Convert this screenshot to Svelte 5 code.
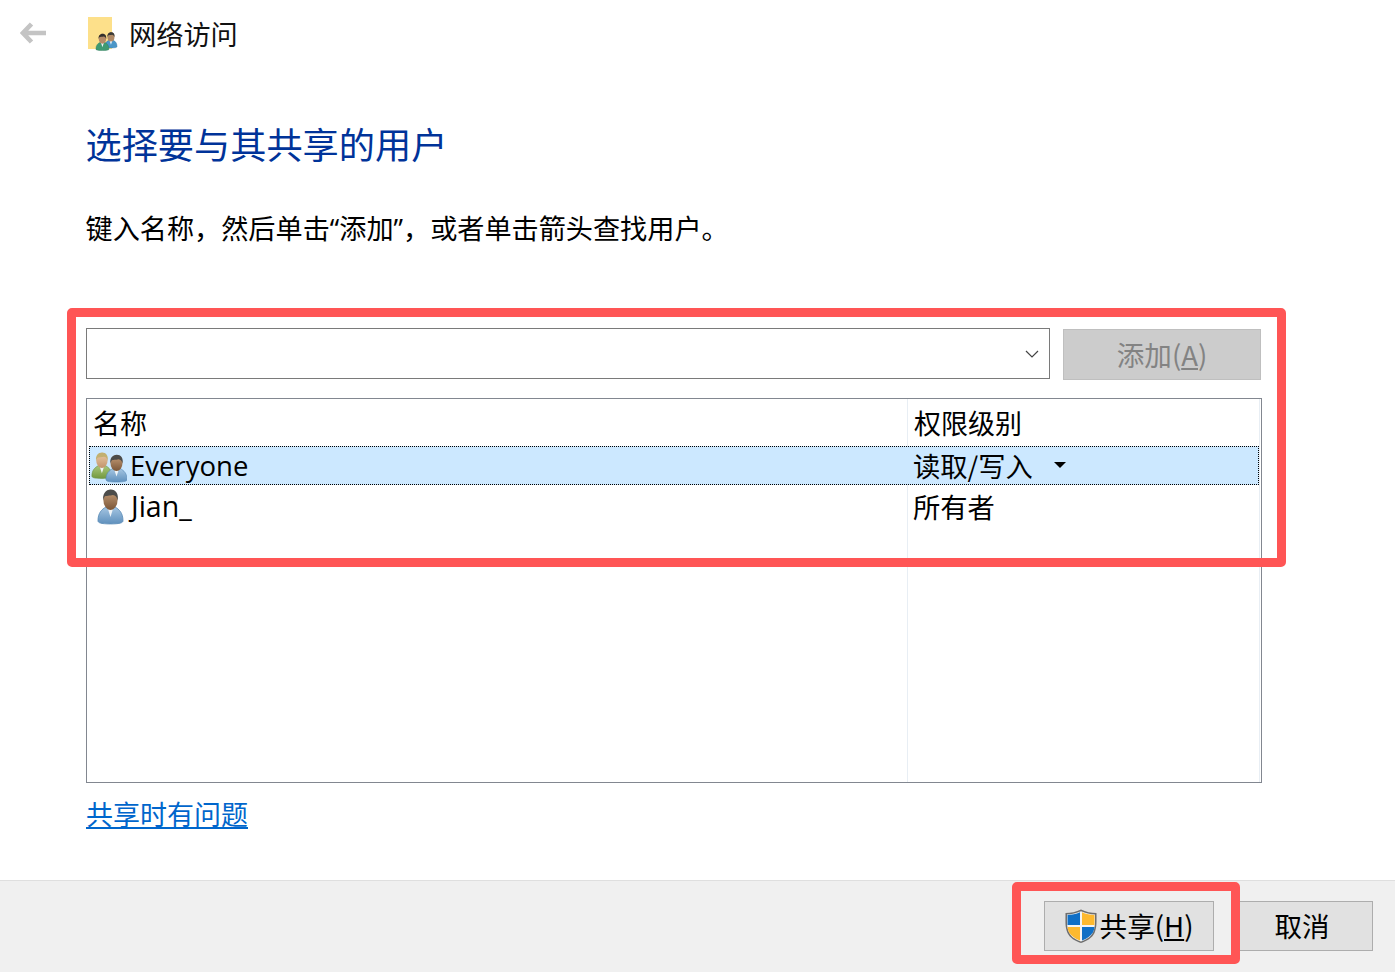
<script>
  const rows = [
    { name: "Everyone", level: "读取/写入", selected: true, group: true },
    { name: "Jian_", level: "所有者", selected: false, group: false }
  ];
</script>

{#snippet person(skin, hair, shirt, shirtDark)}
  <path d="M1.500 25c0-6 3-9 7-11l3.500 1.500 3.500-1.500c4 2 7 5 7 11 0 1.500-2 2.500-10.500 2.500s-10.500-1-10.500-2.500z" fill={shirt} stroke={shirtDark} stroke-width=".7" />
  <path d="M9.500 14.500l2.500 7.500 2.500-7.500-2.500 1z" fill="#eef3f7" />
  <ellipse cx="12" cy="8.500" rx="6" ry="8" fill={skin} />
  <path d="M6 9C5 4 8 .3 12.300 .3c4 0 6.800 3.400 5.700 8.700-.6-2.800-1.800-3.900-4-4.200-2.200.7-6.300.4-7 1.400-.5.800-.8 1.600-1 2.800z" fill={hair} />
{/snippet}

<div class="page">
  <svg class="defs" width="0" height="0" aria-hidden="true">
    <defs>
      <linearGradient id="skin-dark" x1="0" y1="0" x2="0" y2="1">
        <stop offset="0" stop-color="#c9a07a" />
        <stop offset="1" stop-color="#7a5638" />
      </linearGradient>
      <linearGradient id="skin-light" x1="0" y1="0" x2="0" y2="1">
        <stop offset="0" stop-color="#eccba6" />
        <stop offset="1" stop-color="#c2946c" />
      </linearGradient>
      <linearGradient id="shirt-blue" x1="0" y1="0" x2="0" y2="1">
        <stop offset="0" stop-color="#a6c6e2" />
        <stop offset="1" stop-color="#5f90bd" />
      </linearGradient>
      <linearGradient id="shirt-green" x1="0" y1="0" x2="0" y2="1">
        <stop offset="0" stop-color="#a9c77c" />
        <stop offset="1" stop-color="#73993f" />
      </linearGradient>
    </defs>
  </svg>

  <header class="top">
    <svg class="back" width="28" height="22" viewBox="0 0 28 22" aria-hidden="true">
      <path d="M11.500 2L3 11l8.500 9M4 11H26" fill="none" stroke="#c4c4c4" stroke-width="4.600" />
    </svg>
    <svg class="folder" width="30" height="34" viewBox="0 0 30 34" aria-hidden="true">
      <rect x="0" y="0" width="24" height="32" fill="#fde08a" />
      <g transform="translate(16 15) scale(.58)">{@render person("#b08a66", "#3a3a36", "#4a96c8", "#3a7ca8")}</g>
      <g transform="translate(7 16.500) scale(.62)">{@render person("#b58b68", "#33302c", "#3f9a72", "#2f7c5a")}</g>
    </svg>
    <span class="title">网络访问</span>
  </header>

  <main class="content">
    <h1>选择要与其共享的用户</h1>
    <p class="hint">键入名称，然后单击<span class="quote">“</span>添加<span class="quote">”</span>，或者单击箭头查找用户。</p>

    <div class="picker">
      <div class="combo">
        <svg width="14" height="8" viewBox="0 0 14 8" aria-hidden="true">
          <path d="M1 1l6 6 6-6" fill="none" stroke="#444" stroke-width="1.200" />
        </svg>
      </div>
      <button class="add" disabled>添加(<u>A</u>)</button>
    </div>

    <div class="list">
      <div class="row head">
        <span class="name">名称</span>
        <span class="level">权限级别</span>
      </div>
      {#each rows as row}
        <div class="row" class:selected={row.selected}>
          <span class="name" class:solo={!row.group}>
            <svg class="avatar" width="36" height="36" viewBox="0 0 36 36" aria-hidden="true">
              {#if row.group}
                <g transform="translate(-.5 4.300) scale(.95)">{@render person("url(#skin-light)", "#c2b070", "url(#shirt-green)", "#6f9448")}</g>
                <g transform="translate(13.500 6.500)">{@render person("url(#skin-dark)", "#4c4c4a", "url(#shirt-blue)", "#5c8db8")}</g>
              {:else}
                <g transform="translate(5.200 0) scale(1.190 1.270)">{@render person("url(#skin-dark)", "#4c4c4a", "url(#shirt-blue)", "#5c8db8")}</g>
              {/if}
            </svg>
            {row.name}
          </span>
          <span class="level">
            {row.level}
            {#if row.selected}<i class="caret"></i>{/if}
          </span>
        </div>
      {/each}
    </div>

    <a class="help" href="#help">共享时有问题</a>
  </main>

  <footer class="bottom">
    <button class="action share">
      <svg width="34" height="36" viewBox="0 0 34 36" aria-hidden="true">
        <path d="M17 1.500C12 4 7 5 1.500 5c0 9-.5 14 2 20 2.500 5 7.500 8 13.500 10 6-2 11-5 13.500-10 2.500-6 2-11 2-20C27 5 22 4 17 1.500z" fill="#6e6e6e" />
        <path d="M17 3.200C12.500 5.300 8 6.300 3 6.400c0 8-.3 13 2 18 2.300 4.500 6.800 7.300 12 9 5.200-1.700 9.700-4.500 12-9 2.300-5 2-10 2-18-5-.1-9.500-1.100-14-3.200z" fill="#f4f4f4" />
        <path d="M16 4.200C12 6 8 7 3.500 7v10H16z" fill="#0f6fc6" />
        <path d="M18 4.200C22 6 26 7 30.500 7v10H18z" fill="#fdb92f" />
        <path d="M3.500 19c.2 2 .7 3.700 1.500 5.300 2 3.700 6 6.300 11 8.200V19z" fill="#fdb92f" />
        <path d="M18 19v13.500c5-1.900 9-4.500 11-8.200.8-1.600 1.300-3.300 1.500-5.300z" fill="#0f6fc6" />
      </svg>
      <span>共享(<u>H</u>)</span>
    </button>
    <button class="action cancel">取消</button>
  </footer>

  <div class="mark mark-list"></div>
  <div class="mark mark-share"></div>
</div>

<style>
  :global(body) {
    margin: 0;
    background: #fff;
  }

  .page {
    position: relative;
    height: 972px;
    display: flex;
    flex-direction: column;
    overflow: hidden;
    color: #000;
    font-family: "Noto Sans CJK SC", sans-serif;
    font-size: 27px;
  }

  .defs {
    position: absolute;
  }

  .top {
    height: 70px;
    flex: none;
    display: flex;
    align-items: flex-start;
    padding-left: 20px;
  }

  .back {
    margin-top: 22px;
  }

  .folder {
    margin: 17px 11px 0 40px;
  }

  .title {
    font-size: 27.200px;
    line-height: 40px;
    margin-top: 13px;
    color: #111;
  }

  .content {
    flex: 1;
    padding: 48px 133px 0 85.500px;
  }

  h1 {
    margin: 0;
    font-size: 36.200px;
    font-weight: 400;
    line-height: 50px;
    color: #003399;
  }

  .hint {
    margin: 40px 0 79px;
    font-size: 27.150px;
    line-height: 40px;
  }

  .quote {
    font-family: "Open Sans", sans-serif;
  }

  .picker {
    display: flex;
    gap: 13px;
    height: 52px;
    margin-left: .5px;
  }

  .combo {
    box-sizing: border-box;
    width: 964px;
    height: 51px;
    border: 1px solid #7a7a7a;
    display: flex;
    align-items: center;
    justify-content: flex-end;
    padding-right: 10px;
  }

  .add {
    box-sizing: border-box;
    width: 198px;
    height: 51px;
    margin-top: 1px;
    border: 1px solid #bfbfbf;
    background: #cccccc;
    color: #838383;
    font: inherit;
    font-size: 27.600px;
    padding: 0 0 2px;
  }

  .list {
    box-sizing: border-box;
    height: 385px;
    margin: 18px 0 0 .5px;
    padding: 0 2px;
    border: 1px solid #828790;
    background:
      linear-gradient(#e8eef4, #e8eef4) 820px 0 / 1px 100% no-repeat,
      linear-gradient(#e8eef4, #e8eef4) 1172px 0 / 1px 100% no-repeat;
  }

  .row {
    box-sizing: border-box;
    display: grid;
    grid-template-columns: 818px 1fr;
    height: 39px;
    border: 1px solid transparent;
    line-height: 37px;
    margin-bottom: 2px;
  }

  .row.head {
    height: 47px;
    line-height: 48px;
    margin-bottom: 0;
    border: 0;
  }

  .row.selected {
    background: #cce8ff;
    border: 1px dotted #000;
  }

  .name {
    display: flex;
    align-items: center;
    padding-left: 1px;
    gap: 3px;
    font-family: "Open Sans", sans-serif;
    font-size: 27.500px;
  }

  .name.solo {
    font-size: 28.500px;
    gap: 4px;
  }

  .head .name {
    padding-left: 4px;
    font-family: inherit;
    font-size: 27px;
  }

  .level {
    display: flex;
    align-items: center;
    padding-left: 5px;
    font-size: 27.300px;
  }

  .head .level {
    padding-left: 7px;
    font-size: 27px;
  }

  .caret {
    width: 0;
    height: 0;
    margin: 0 0 2px 21px;
    border: 6px solid transparent;
    border-top-color: #000;
    border-bottom-width: 0;
  }

  .avatar {
    flex: none;
  }

  .help {
    display: inline-block;
    margin: 11px 0 0 .5px;
    line-height: 40px;
    color: #0066cc;
  }

  .bottom {
    box-sizing: border-box;
    flex: none;
    height: 92px;
    display: flex;
    justify-content: flex-end;
    gap: 24px;
    padding: 20px 22px 0 0;
    background: #f0f0f0;
    border-top: 1px solid #dfdfdf;
  }

  .action {
    box-sizing: border-box;
    height: 50px;
    border: 1px solid #adadad;
    background: #e1e1e1;
    color: #000;
    font-family: "Noto Sans CJK SC", sans-serif;
    font-size: 27.600px;
    padding: 0 0 2px;
  }

  .share {
    width: 170px;
    display: flex;
    align-items: center;
    justify-content: center;
    gap: 2px;
  }

  .share svg {
    margin: 2px 0 0 -1px;
  }

  .cancel {
    width: 135px;
    padding-right: 7px;
  }

  .mark {
    position: absolute;
    box-sizing: border-box;
    border: 9px solid #ff5555;
    border-radius: 5px;
  }

  .mark-list {
    left: 67px;
    top: 308px;
    width: 1219px;
    height: 259px;
  }

  .mark-share {
    left: 1012px;
    top: 882px;
    width: 228px;
    height: 82px;
  }
</style>
